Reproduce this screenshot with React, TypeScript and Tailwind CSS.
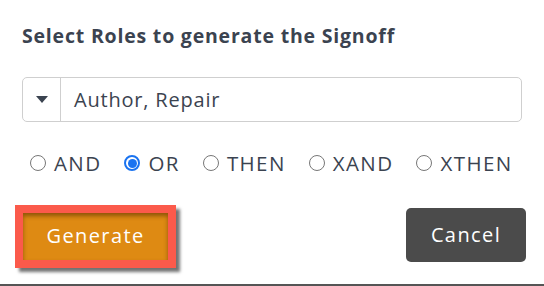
import React, { useState } from 'react';

const ops = ['AND', 'OR', 'THEN', 'XAND', 'XTHEN'];

export default function App() {
  const [op, setOp] = useState('OR');

  return (
    <div className="w-[544px] h-[286px] bg-white border-b-2 border-[#555] flex flex-col font-['Open_Sans',sans-serif] text-[#3b4350]">
      {/* Title */}
      <h2 className="pl-[22px] pt-[24px] text-[19.5px] font-bold leading-[24px] tracking-[0.8px]">
        Select Roles to generate the Signoff
      </h2>

      {/* Roles select */}
      <div className="mx-[22px] mt-[29px] h-[45px] flex border border-[#cfcfcf] rounded-[5px]">
        <div className="w-[38px] flex items-center justify-center border-r border-[#cfcfcf]">
          <svg width="12" height="7" viewBox="0 0 12 7">
            <path d="M0 0h12L6 7z" fill="#3b4350" />
          </svg>
        </div>
        <div className="flex items-center pl-[13px] text-[20px] tracking-[0.8px]">Author, Repair</div>
      </div>

      {/* Operators */}
      <div className="flex items-center pl-[30px] mt-[26px] gap-[23px]">
        {ops.map((o) => (
          <label key={o} className="flex items-center gap-[8px] text-[20.5px] tracking-[1.4px] cursor-pointer" onClick={() => setOp(o)}>
            {op === o ? (
              <span className="w-[16px] h-[16px] rounded-full border-2 border-[#1a73f0] flex items-center justify-center">
                <span className="w-[9px] h-[9px] rounded-full bg-[#1a73f0]" />
              </span>
            ) : (
              <span className="w-[16px] h-[16px] rounded-full border border-[#777]" />
            )}
            <span>{o}</span>
          </label>
        ))}
      </div>

      {/* Buttons */}
      <div className="flex items-start justify-between pl-[15px] pr-[18px] mt-[26px]">
        <div className="border-[8px] border-[#fb5a4b] shadow-[4px_4px_3px_rgba(0,0,0,0.55)]">
          <button className="w-[145px] h-[47px] bg-[#de8a13] text-white text-[20px] tracking-[1.4px] shadow-[inset_0_3px_4px_rgba(90,50,0,0.6)]">
            Generate
          </button>
        </div>
        <button className="mt-[3px] w-[120px] h-[54px] rounded-[5px] bg-[#4b4b4b] text-white text-[20px] tracking-[1.4px]">
          Cancel
        </button>
      </div>
    </div>
  );
}
